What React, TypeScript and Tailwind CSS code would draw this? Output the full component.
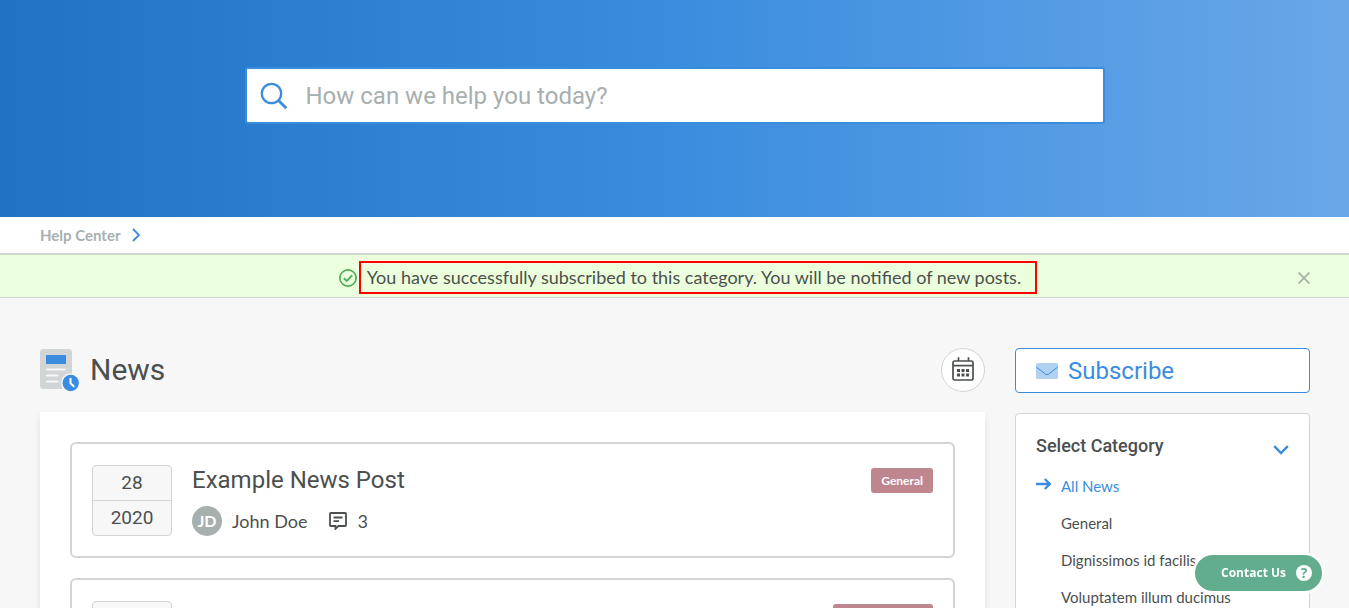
import React from "react";

const categories = ["General", "Dignissimos id facilis", "Voluptatem illum ducimus"];

function SearchIcon() {
  return (
    <svg viewBox="0 0 28 28" className="h-7 w-7 shrink-0" fill="none" stroke="#3a8dde" strokeWidth="2.2">
      <circle cx="11.5" cy="11.5" r="9.7" />
      <path d="M18.5 18.5 26.3 26.3" strokeWidth="2.8" />
    </svg>
  );
}

function NewsIcon() {
  return (
    <svg viewBox="0 0 40 43" className="h-[43px] w-10 shrink-0">
      <rect x="0" y="0" width="32" height="40" rx="3" fill="#d1d5d6" />
      <rect x="6" y="6" width="20" height="9" fill="#3a8dde" />
      <g stroke="#f7f7f7" strokeWidth="2" strokeLinecap="round">
        <path d="M7 20.5H25M7 26.5H17.5M7 32.5H17.5" />
      </g>
      <circle cx="30.7" cy="34" r="9.7" fill="#f7f7f7" />
      <circle cx="30.7" cy="34" r="8.2" fill="#3a8dde" />
      <path d="M30.5 29.8V34.2L33.7 37.2" fill="none" stroke="#fff" strokeWidth="2" strokeLinecap="round" />
    </svg>
  );
}

function CalendarIcon() {
  return (
    <svg viewBox="0 0 22 24" className="mb-0.5 h-6 w-[22px]" fill="none" stroke="#4b4f4f" strokeWidth="1.7">
      <rect x="1" y="4" width="20" height="19" rx="1.8" />
      <path d="M1 8.6H21" />
      <path d="M6.5 0.3V4M16.5 0.3V4" />
      <g fill="#4b4f4f" stroke="none">
        <path d="M5 12h3v3H5zM9.5 12h3v3h-3zM14 12h3v3h-3zM5 16.5h3v3H5zM9.5 16.5h3v3h-3zM14 16.5h3v3h-3z" />
      </g>
    </svg>
  );
}

function PostCard({ children, tag }: { children?: React.ReactNode; tag?: string }) {
  return (
    <article className="flex min-h-29 items-start gap-5 rounded-md border-2 border-[#d1d5d6] bg-white px-5 pt-[21px] pb-5">
      {children}
      <span
        className={
          "ml-auto mt-[3px] h-[25px] rounded-[3px] bg-[#c0868f] px-2.5 text-center text-xs leading-[25px] font-bold text-white " +
          (tag ? "" : "w-25")
        }
      >
        {tag}
      </span>
    </article>
  );
}

export default function App() {
  return (
    <div className="h-screen overflow-y-auto bg-[#f7f7f7] font-['Lato',sans-serif] text-[#4b4f4f] [scrollbar-width:none]">
      <header className="bg-[linear-gradient(90deg,#2072c4_0%,#3a8dde_50%,#69a7e8_100%)] px-10 pt-[67px] pb-[93px]">
        <label className="mx-auto flex h-[57px] max-w-[860px] items-center gap-[18px] rounded-[3px] border-2 border-[#3a8dde] bg-white px-[13px]">
          <SearchIcon />
          <input
            type="text"
            aria-label="Search"
            placeholder="How can we help you today?"
            className="min-w-0 flex-1 bg-transparent font-['Roboto',sans-serif] text-2xl outline-none placeholder:text-[#a7afaf]"
          />
        </label>
      </header>

      <nav className="flex h-[38px] items-center gap-3 border-b-2 border-[#d1d5d6] bg-white px-10 text-[15px] font-bold text-[#a7afaf]">
        <a href="#">Help Center</a>
        <svg viewBox="0 0 8 14" className="h-3.5 w-2" fill="none" stroke="#3a8dde" strokeWidth="1.8">
          <path d="M1 1 7 7 1 13" />
        </svg>
      </nav>

      <div role="status" className="flex h-[43px] items-center border-b border-[#d1d5d6] bg-[#ecffdc] pr-[39px]">
        <div className="flex flex-1 items-center justify-center gap-0.5 pt-0.5 pl-[78px]">
          <svg viewBox="0 0 18 18" className="mt-0.5 h-[18px] w-[18px] shrink-0" fill="none" stroke="#4cae5a" strokeWidth="1.7">
            <circle cx="9" cy="9" r="8.1" />
            <path d="M4.8 9.2 7.8 12 13.2 6.3" strokeWidth="1.9" />
          </svg>
          <p className="h-[33px] border-2 border-[#f00] pr-3.5 pl-1.5 text-lg leading-7">
            You have successfully subscribed to this category. You will be notified of new posts.
          </p>
        </div>
        <button type="button" aria-label="Dismiss" className="flex w-3 items-center justify-center">
          <svg viewBox="0 0 12 12" className="mt-1 h-3 w-3" stroke="#a7afaf" strokeWidth="1.8">
            <path d="M0.5 0.5 11.5 11.5M11.5 0.5 0.5 11.5" />
          </svg>
        </button>
      </div>

      <div className="flex items-start gap-[30px] pt-[50px] pr-[39px] pl-10">
        <main className="min-w-0 flex-1">
          <div className="flex h-11 items-center justify-between">
            <h1 className="flex items-center gap-2.5 font-['Roboto',sans-serif] text-3xl leading-10">
              <NewsIcon />
              News
            </h1>
            <button
              type="button"
              aria-label="Calendar"
              className="flex h-11 w-11 items-center justify-center rounded-full border border-[#d1d5d6] bg-white"
            >
              <CalendarIcon />
            </button>
          </div>
          <section className="mt-5 flex flex-col gap-5 bg-white p-[30px] shadow-[0_5px_7px_rgba(0,0,0,0.1)]">
            <PostCard tag="General">
              <div className="w-20 overflow-hidden rounded-[4px] border border-[#d1d5d6] bg-[#f7f7f7] text-center font-['Roboto',sans-serif] text-[19px] leading-[34px]">
                <div>28</div>
                <div className="border-t border-[#d1d5d6]">2020</div>
              </div>
              <div>
                <h2 className="font-['Roboto',sans-serif] text-2xl leading-[30px]">
                  <a href="#">Example News Post</a>
                </h2>
                <div className="mt-[11px] flex items-center text-lg leading-[30px]">
                  <span className="flex h-[30px] w-[30px] items-center justify-center rounded-full bg-[#a7afaf] text-base font-bold text-white">
                    JD
                  </span>
                  <span className="ml-2.5">John Doe</span>
                  <svg viewBox="0 0 18 18" className="ml-[22px] h-[18px] w-[18px]" fill="none" stroke="#4b4f4f" strokeWidth="1.8">
                    <path d="M1.8 1H16.2Q17 1 17 1.8V13.2Q17 14 16.2 14H9.5L6.5 16.8V14H1.8Q1 14 1 13.2V1.8Q1 1 1.8 1Z" />
                    <path d="M4.5 5.5H13.5M4.5 9.2H10" />
                  </svg>
                  <span className="ml-2.5">3</span>
                </div>
              </div>
            </PostCard>
            <PostCard>
              <div className="h-[71px] w-20 rounded-[4px] border border-[#d1d5d6] bg-[#f7f7f7]" />
            </PostCard>
          </section>
        </main>

        <aside className="flex w-[295px] shrink-0 flex-col gap-5">
          <button
            type="button"
            className="flex h-[45px] items-center gap-2.5 rounded-[4px] border border-[#3a8dde] bg-white px-5 font-['Roboto',sans-serif] text-2xl text-[#3a8dde]"
          >
            <svg viewBox="0 0 22 16" className="h-4 w-[22px]">
              <rect width="22" height="16" rx="1.5" fill="#b0d1f2" />
              <path d="M0.3 4 9.7 11.3Q11 12.2 12.3 11.3L21.7 4" fill="none" stroke="#3a8dde" />
            </svg>
            Subscribe
          </button>
          <section className="rounded-[4px] border border-[#d1d5d6] bg-white px-5 pt-5 pb-5">
            <div className="flex items-center justify-between">
              <h2 className="font-['Roboto',sans-serif] text-lg leading-6 font-medium">Select Category</h2>
              <svg viewBox="0 0 16 10" className="mt-2 h-2.5 w-4" fill="none" stroke="#3a8dde" strokeWidth="2.4">
                <path d="M1.2 1.2 8 8 14.8 1.2" />
              </svg>
            </div>
            <ul className="mt-2.5 text-[15px] leading-[37px]">
              <li className="flex items-center gap-2.5 text-[#3a8dde]">
                <svg viewBox="0 0 15 12" className="mb-1.5 h-3 w-[15px]" fill="none" stroke="#3a8dde" strokeWidth="2.4">
                  <path d="M0 6H13.5M8.8 1 13.8 6 8.8 11" />
                </svg>
                <a href="#">All News</a>
              </li>
              {categories.map((name) => (
                <li key={name} className="pl-[25px]">
                  <a href="#">{name}</a>
                </li>
              ))}
            </ul>
          </section>
        </aside>
      </div>

      <button
        type="button"
        className="fixed right-[27px] bottom-[17px] flex h-9 items-center gap-2.5 rounded-full bg-[#62ad8d] pr-2.5 pl-[26px] font-['Open_Sans',sans-serif] text-xs font-bold text-white shadow-[0_0_0_3px_rgba(255,255,255,0.8)]"
      >
        Contact Us
        <span className="flex h-4 w-4 items-center justify-center rounded-full bg-white text-sm leading-4 text-[#62ad8d]">?</span>
      </button>
    </div>
  );
}
